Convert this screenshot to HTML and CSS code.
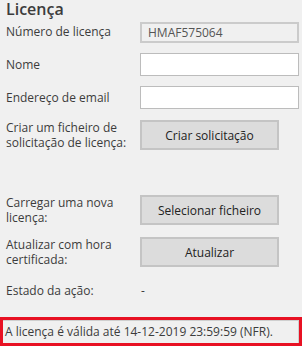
FILE: index.html
```html
<!doctype html>
<html>
  <head>
    <meta charset="utf-8">
    <link rel="stylesheet" href="styles.css">
  </head>
  <body>
    <div class="panel">
      <h1 class="title">Licença</h1>

      <div class="row row-license">
        <label class="label">Número de licença</label>
        <input class="field field-readonly" type="text" value="HMAF575064" readonly>
      </div>

      <div class="row row-name">
        <label class="label">Nome</label>
        <input class="field" type="text">
      </div>

      <div class="row row-email">
        <label class="label">Endereço de email</label>
        <input class="field" type="text">
      </div>

      <div class="row row-request">
        <label class="label">Criar um ficheiro de solicitação de licença:</label>
        <button class="btn">Criar solicitação</button>
      </div>

      <div class="row row-upload">
        <label class="label">Carregar uma nova licença:</label>
        <button class="btn">Selecionar ficheiro</button>
      </div>

      <div class="row row-update">
        <label class="label">Atualizar com hora certificada:</label>
        <button class="btn">Atualizar</button>
      </div>

      <div class="row row-state">
        <span class="label">Estado da ação:</span>
        <span class="value">-</span>
      </div>
    </div>

    <div class="status">
      <div class="status-box">A licença é válida até 14-12-2019 23:59:59 (NFR).</div>
    </div>
  </body>
</html>
```

FILE: styles.css
```css
* {
  box-sizing: border-box;
}

html {
  height: 100%;
}

body {
  margin: 0;
  height: 100%;
  background-color: #f0f0f0;
  font-family: "Segoe UI", "Open Sans", sans-serif;
  font-size: 12px;
  color: #3c3c3c;
  display: flex;
  flex-direction: column;
}

.panel {
  flex: 1;
  padding: 0 3px 0 6px;
}

.title {
  margin: 0;
  height: 20px;
  font-size: 16px;
  font-weight: 600;
  line-height: 18px;
  color: #3c3c3c;
}

.row {
  display: grid;
  grid-template-columns: 134px 1fr;
  align-items: center;
}

.label {
  line-height: 15px;
}

.field {
  display: block;
  width: 159px;
  margin: 0;
  padding: 0 6px;
  font: inherit;
  color: #333;
  background-color: #fff;
  border: 1px solid #bcbcbc;
  outline: none;
}

.field-readonly {
  background-color: #f0f0f0;
  border: 2px solid #cbcbcb;
  color: #555;
}

.row-license .field {
  height: 21px;
  margin-top: 2px;
}

.row-name {
  margin-top: 10px;
}

.row-name .field,
.row-email .field {
  height: 23px;
}

.row-email {
  margin-top: 10px;
}

.btn {
  width: 139px;
  height: 30px;
  margin: 0;
  padding: 0;
  font: inherit;
  color: #222;
  background-color: #dcdcdc;
  border: 2px solid #c4c4c4;
}

.row-request {
  margin-top: 11px;
}

.row-upload {
  margin-top: 45px;
}

.row-update {
  margin-top: 12px;
}

.row-state {
  margin-top: 15px;
}

.value {
  padding-left: 1px;
}

.status {
  height: 29px;
  border: 3px solid #e81123;
}

.status-box {
  height: 100%;
  padding: 0 0 0 2px;
  border-top: 1px solid #cfcfcf;
  border-right: 1px solid #cfcfcf;
  line-height: 22px;
  color: #3c3c3c;
}
```
